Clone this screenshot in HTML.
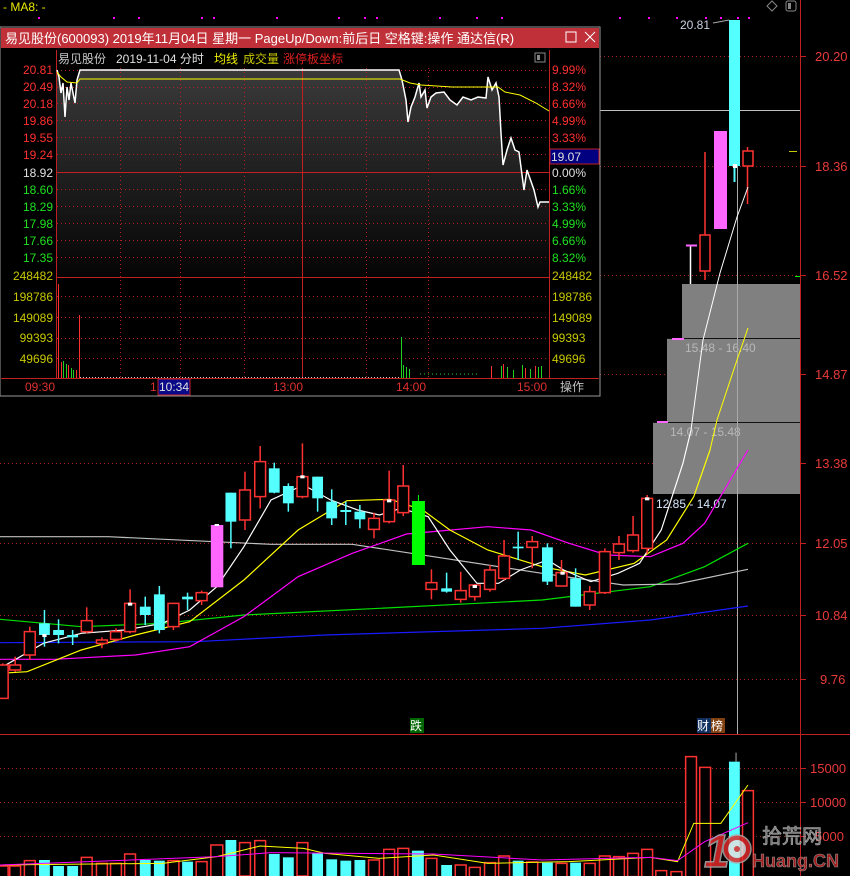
<!DOCTYPE html>
<html><head><meta charset="utf-8"><style>
body{margin:0;background:#000;width:850px;height:876px;overflow:hidden;font-family:"Liberation Sans","Noto Sans CJK SC",sans-serif;}
svg{position:absolute;left:0;top:0}
text{font-family:"Liberation Sans","Noto Sans CJK SC",sans-serif}
</style></head><body>
<svg width="850" height="876" viewBox="0 0 850 876">
<defs>
<linearGradient id="gg" x1="0" y1="0" x2="0" y2="1"><stop offset="0" stop-color="#3a3a3a"/><stop offset="1" stop-color="#050505"/></linearGradient>
</defs>
<rect width="850" height="876" fill="#000"/>
<text x="3" y="11" font-size="12" fill="#e8e800">-  MA8: -</text>
<g fill="#ff00ff">
<rect x="38" y="17" width="2" height="2"/><rect x="113" y="17" width="2" height="2"/><rect x="138" y="17" width="2" height="2"/><rect x="201" y="17" width="2" height="2"/><rect x="213" y="17" width="2" height="2"/><rect x="276" y="17" width="2" height="2"/><rect x="338" y="17" width="2" height="2"/><rect x="364" y="17" width="2" height="2"/><rect x="376" y="17" width="2" height="2"/><rect x="439" y="17" width="2" height="2"/><rect x="476" y="17" width="2" height="2"/><rect x="501" y="17" width="2" height="2"/>
<rect x="619" y="17" width="2" height="2"/><rect x="648" y="17" width="2" height="2"/><rect x="676" y="17" width="2" height="2"/><rect x="705" y="17" width="2" height="2"/><rect x="720" y="17" width="2" height="2"/><rect x="737" y="17" width="2" height="2"/><rect x="748" y="17" width="2" height="2"/>
</g>
<path d="M772 1 L777 6 L772 11 L767 6Z" fill="none" stroke="#888"/>
<rect x="786" y="1" width="10" height="10" rx="2" fill="none" stroke="#888"/><rect x="788" y="3" width="3" height="6" fill="#888"/>
<line x1="800.5" y1="0" x2="800.5" y2="876" stroke="#c02020"/>
<line x1="0" y1="734.5" x2="850" y2="734.5" stroke="#c02020"/>
<g stroke="#a02020" stroke-dasharray="1,3">
<line x1="0" y1="56.5" x2="800" y2="56.5"/><line x1="0" y1="166.5" x2="800" y2="166.5"/><line x1="0" y1="275.5" x2="800" y2="275.5"/><line x1="0" y1="374.5" x2="800" y2="374.5"/><line x1="0" y1="463.5" x2="800" y2="463.5"/><line x1="0" y1="543.5" x2="800" y2="543.5"/><line x1="0" y1="615.5" x2="800" y2="615.5"/><line x1="0" y1="679.5" x2="800" y2="679.5"/>
<line x1="0" y1="768.5" x2="800" y2="768.5"/><line x1="0" y1="802.5" x2="800" y2="802.5"/><line x1="0" y1="836.5" x2="800" y2="836.5"/>
</g>
<g stroke="#c02020"><line x1="800" y1="56.5" x2="806" y2="56.5"/><line x1="800" y1="166.5" x2="806" y2="166.5"/><line x1="800" y1="275.5" x2="806" y2="275.5"/><line x1="800" y1="374.5" x2="806" y2="374.5"/><line x1="800" y1="463.5" x2="806" y2="463.5"/><line x1="800" y1="543.5" x2="806" y2="543.5"/><line x1="800" y1="615.5" x2="806" y2="615.5"/><line x1="800" y1="679.5" x2="806" y2="679.5"/><line x1="800" y1="768.5" x2="806" y2="768.5"/><line x1="800" y1="802.5" x2="806" y2="802.5"/><line x1="800" y1="836.5" x2="806" y2="836.5"/></g>
<g font-size="13" fill="#e83a3a">
<text x="815" y="61">20.20</text><text x="815" y="171">18.36</text><text x="815" y="280">16.52</text><text x="815" y="379">14.87</text><text x="815" y="468">13.38</text><text x="815" y="548">12.05</text><text x="815" y="620">10.84</text><text x="820" y="684">9.76</text>
<text x="810" y="773">15000</text><text x="810" y="807">10000</text><text x="815" y="841">5000</text>
</g>
<line x1="789" y1="151.5" x2="797" y2="151.5" stroke="#c8c800"/><line x1="795" y1="276.5" x2="800" y2="276.5" stroke="#00ff00"/>
<rect x="682" y="284" width="118" height="54" fill="#808080"/>
<rect x="667" y="338" width="133" height="84" fill="#808080"/>
<rect x="653" y="422" width="147" height="72" fill="#808080"/>
<line x1="667" y1="338.5" x2="800" y2="338.5" stroke="#111"/><line x1="653" y1="422.5" x2="800" y2="422.5" stroke="#111"/>
<g font-size="12" fill="#b8b8b8"><text x="685" y="352">15.48 - 16.40</text><text x="670" y="436">14.07 - 15.48</text></g>
<text x="656" y="508" font-size="12" fill="#d8e8ff">12.85 - 14.07</text>
<line x1="600" y1="110.5" x2="800" y2="110.5" stroke="#c0c0c0"/>
<line x1="737.5" y1="20" x2="737.5" y2="734" stroke="#aaa"/>
<line x1="690.5" y1="245" x2="690.5" y2="284" stroke="#fff" stroke-width="1.5"/><line x1="686" y1="245.5" x2="697" y2="245.5" stroke="#ff66ff" stroke-width="2"/>
<line x1="672" y1="339" x2="684" y2="339" stroke="#ff66ff" stroke-width="2"/><line x1="657" y1="422" x2="668" y2="422" stroke="#ff66ff" stroke-width="2"/>
<line x1="705" y1="152" x2="705" y2="280" stroke="#ff3232" stroke-width="1.5"/><rect x="700" y="235" width="10" height="36" fill="#000" stroke="#ff3232" stroke-width="1.5"/>
<rect x="714" y="131" width="13" height="98" fill="#ff66ff"/>
<line x1="734.5" y1="20" x2="734.5" y2="182" stroke="#54ffff" stroke-width="2"/><rect x="729" y="20" width="11" height="146" fill="#54ffff"/><rect x="733" y="164" width="4" height="4" fill="#fff"/>
<line x1="747.5" y1="147" x2="747.5" y2="204" stroke="#ff3232" stroke-width="1.5"/><rect x="743" y="151" width="10" height="15" fill="#000" stroke="#ff3232" stroke-width="1.5"/>
<text x="680" y="29" font-size="12" fill="#c8d0e0">20.81</text><line x1="713" y1="23" x2="729" y2="20" stroke="#aaa"/>
<polyline fill="none" stroke="#fff" points="691,430 703,340 720,273 737,217 748,187"/>
<polyline fill="none" stroke="#ffff00" points="710,450 717,420 737,360 748,328"/>
<g transform="translate(0,430) scale(0.542,0.33333)">
<g fill="none" stroke-width="1.2">
<polyline vector-effect="non-scaling-stroke" stroke="#1a1aff" points="0,638 360,635 600,615 1000,595 1200,570 1380,528"/>
<polyline vector-effect="non-scaling-stroke" stroke="#00e000" points="0,568 150,590 300,580 450,555 700,535 1000,510 1200,470 1300,410 1380,340"/>
<polyline vector-effect="non-scaling-stroke" stroke="#c0c0c0" points="0,320 200,320 500,343 650,343 800,380 1000,430 1150,465 1250,462 1380,418"/>
<polyline vector-effect="non-scaling-stroke" stroke="#ff00ff" points="0,688 100,688 250,675 350,650 450,560 550,440 650,370 750,312 900,290 980,300 1050,340 1120,375 1200,380 1260,340 1300,280 1380,60"/>
<polyline vector-effect="non-scaling-stroke" stroke="#ffff00" points="0,730 50,725 150,660 250,615 350,575 450,450 550,300 640,212 720,208 780,240 830,300 900,360 1000,410 1080,435 1170,400 1230,330 1280,200 1310,60"/>
<polyline vector-effect="non-scaling-stroke" stroke="#ffffff" points="0,715 80,640 150,610 230,600 300,580 350,540 400,470 450,350 500,210 560,165 610,210 660,240 700,255 740,235 790,260 830,360 880,460 920,460 960,420 1010,390 1040,420 1090,455 1140,430 1180,400 1220,300 1260,100 1275,0"/>
</g>
<g stroke="#ff3232" stroke-width="1.5">
<line vector-effect="non-scaling-stroke" x1="5" y1="700" x2="5" y2="805"/><line vector-effect="non-scaling-stroke" x1="28" y1="680" x2="28" y2="725"/><line vector-effect="non-scaling-stroke" x1="55" y1="590" x2="55" y2="690"/><line vector-effect="non-scaling-stroke" x1="160" y1="532" x2="160" y2="610"/><line vector-effect="non-scaling-stroke" x1="188" y1="622" x2="188" y2="655"/><line vector-effect="non-scaling-stroke" x1="214" y1="595" x2="214" y2="635"/><line vector-effect="non-scaling-stroke" x1="240" y1="478" x2="240" y2="610"/><line vector-effect="non-scaling-stroke" x1="320" y1="520" x2="320" y2="600"/><line vector-effect="non-scaling-stroke" x1="372" y1="482" x2="372" y2="525"/><line vector-effect="non-scaling-stroke" x1="452" y1="125" x2="452" y2="300"/><line vector-effect="non-scaling-stroke" x1="480" y1="48" x2="480" y2="235"/><line vector-effect="non-scaling-stroke" x1="558" y1="40" x2="558" y2="205"/><line vector-effect="non-scaling-stroke" x1="690" y1="248" x2="690" y2="325"/><line vector-effect="non-scaling-stroke" x1="718" y1="122" x2="718" y2="280"/><line vector-effect="non-scaling-stroke" x1="744" y1="105" x2="744" y2="258"/><line vector-effect="non-scaling-stroke" x1="796" y1="418" x2="796" y2="508"/><line vector-effect="non-scaling-stroke" x1="850" y1="425" x2="850" y2="518"/><line vector-effect="non-scaling-stroke" x1="876" y1="462" x2="876" y2="512"/><line vector-effect="non-scaling-stroke" x1="904" y1="405" x2="904" y2="485"/><line vector-effect="non-scaling-stroke" x1="930" y1="330" x2="930" y2="450"/><line vector-effect="non-scaling-stroke" x1="982" y1="318" x2="982" y2="415"/><line vector-effect="non-scaling-stroke" x1="1036" y1="390" x2="1036" y2="470"/><line vector-effect="non-scaling-stroke" x1="1088" y1="468" x2="1088" y2="540"/><line vector-effect="non-scaling-stroke" x1="1116" y1="355" x2="1116" y2="492"/><line vector-effect="non-scaling-stroke" x1="1142" y1="318" x2="1142" y2="390"/><line vector-effect="non-scaling-stroke" x1="1168" y1="258" x2="1168" y2="368"/><line vector-effect="non-scaling-stroke" x1="1194" y1="195" x2="1194" y2="372"/>
</g>
<g fill="#000" stroke="#ff3232" stroke-width="1.5">
<rect vector-effect="non-scaling-stroke" x="-5" y="705" width="20" height="100"/><rect vector-effect="non-scaling-stroke" x="18" y="705" width="20" height="15"/><rect vector-effect="non-scaling-stroke" x="45" y="605" width="20" height="70"/><rect vector-effect="non-scaling-stroke" x="150" y="572" width="20" height="33"/><rect vector-effect="non-scaling-stroke" x="178" y="630" width="20" height="10"/><rect vector-effect="non-scaling-stroke" x="204" y="605" width="20" height="23"/><rect vector-effect="non-scaling-stroke" x="230" y="520" width="20" height="85"/><rect vector-effect="non-scaling-stroke" x="310" y="520" width="20" height="70"/><rect vector-effect="non-scaling-stroke" x="362" y="488" width="20" height="24"/><rect vector-effect="non-scaling-stroke" x="442" y="180" width="20" height="90"/><rect vector-effect="non-scaling-stroke" x="470" y="95" width="20" height="105"/><rect vector-effect="non-scaling-stroke" x="548" y="140" width="20" height="60"/><rect vector-effect="non-scaling-stroke" x="680" y="265" width="20" height="33"/><rect vector-effect="non-scaling-stroke" x="708" y="210" width="20" height="65"/><rect vector-effect="non-scaling-stroke" x="734" y="168" width="20" height="80"/><rect vector-effect="non-scaling-stroke" x="786" y="458" width="20" height="20"/><rect vector-effect="non-scaling-stroke" x="840" y="482" width="20" height="26"/><rect vector-effect="non-scaling-stroke" x="866" y="465" width="20" height="35"/><rect vector-effect="non-scaling-stroke" x="894" y="420" width="20" height="58"/><rect vector-effect="non-scaling-stroke" x="920" y="378" width="20" height="67"/><rect vector-effect="non-scaling-stroke" x="972" y="335" width="20" height="17"/><rect vector-effect="non-scaling-stroke" x="1026" y="428" width="20" height="40"/><rect vector-effect="non-scaling-stroke" x="1078" y="485" width="20" height="40"/><rect vector-effect="non-scaling-stroke" x="1106" y="365" width="20" height="123"/><rect vector-effect="non-scaling-stroke" x="1132" y="342" width="20" height="26"/><rect vector-effect="non-scaling-stroke" x="1158" y="315" width="20" height="47"/><rect vector-effect="non-scaling-stroke" x="1184" y="205" width="20" height="150"/>
</g>
<g stroke="#54ffff" stroke-width="1.5">
<line vector-effect="non-scaling-stroke" x1="82" y1="540" x2="82" y2="650"/><line vector-effect="non-scaling-stroke" x1="108" y1="568" x2="108" y2="640"/><line vector-effect="non-scaling-stroke" x1="134" y1="600" x2="134" y2="645"/><line vector-effect="non-scaling-stroke" x1="268" y1="500" x2="268" y2="585"/><line vector-effect="non-scaling-stroke" x1="294" y1="468" x2="294" y2="610"/><line vector-effect="non-scaling-stroke" x1="346" y1="488" x2="346" y2="540"/><line vector-effect="non-scaling-stroke" x1="426" y1="188" x2="426" y2="355"/><line vector-effect="non-scaling-stroke" x1="506" y1="98" x2="506" y2="190"/><line vector-effect="non-scaling-stroke" x1="532" y1="160" x2="532" y2="245"/><line vector-effect="non-scaling-stroke" x1="586" y1="140" x2="586" y2="245"/><line vector-effect="non-scaling-stroke" x1="612" y1="178" x2="612" y2="285"/><line vector-effect="non-scaling-stroke" x1="638" y1="215" x2="638" y2="285"/><line vector-effect="non-scaling-stroke" x1="664" y1="225" x2="664" y2="295"/><line vector-effect="non-scaling-stroke" x1="824" y1="428" x2="824" y2="488"/><line vector-effect="non-scaling-stroke" x1="956" y1="305" x2="956" y2="390"/><line vector-effect="non-scaling-stroke" x1="1010" y1="340" x2="1010" y2="465"/><line vector-effect="non-scaling-stroke" x1="1062" y1="415" x2="1062" y2="530"/>
</g>
<g fill="#54ffff">
<rect x="72" y="580" width="20" height="35"/><rect x="98" y="600" width="20" height="15"/><rect x="124" y="615" width="20" height="7"/><rect x="258" y="530" width="20" height="25"/><rect x="284" y="493" width="20" height="107"/><rect x="336" y="500" width="20" height="8"/><rect x="416" y="188" width="20" height="87"/><rect x="496" y="115" width="20" height="73"/><rect x="522" y="168" width="20" height="52"/><rect x="576" y="140" width="20" height="65"/><rect x="602" y="215" width="20" height="50"/><rect x="628" y="240" width="20" height="6"/><rect x="654" y="245" width="20" height="23"/><rect x="814" y="475" width="20" height="10"/><rect x="946" y="350" width="20" height="5"/><rect x="1000" y="352" width="20" height="103"/><rect x="1052" y="445" width="20" height="85"/>
</g>
<rect x="389" y="285" width="23" height="187" fill="#ff66ff"/>
<line x1="772" y1="195" x2="772" y2="405" stroke="#00ff00" vector-effect="non-scaling-stroke"/><rect x="760" y="213" width="24" height="192" fill="#00ff00"/>
<g fill="#fff"><rect x="236" y="518" width="8" height="9"/><rect x="78" y="612" width="8" height="9"/><rect x="554" y="136" width="8" height="9"/><rect x="714" y="208" width="8" height="9"/><rect x="872" y="465" width="8" height="9"/><rect x="1034" y="425" width="8" height="9"/><rect x="1190" y="202" width="8" height="9"/><rect x="396" y="282" width="8" height="6"/></g>
</g>
<rect x="410" y="718" width="14" height="15" fill="#006600"/><text x="410" y="730" font-size="12" fill="#fff">跌</text>
<rect x="697" y="718" width="14" height="15" fill="#103060"/><text x="697" y="730" font-size="12" fill="#fff">财</text>
<rect x="711" y="718" width="14" height="15" fill="#804010"/><text x="711" y="730" font-size="12" fill="#fff">榜</text>
<g transform="translate(0,430) scale(0.542,0.33333)">
<g fill="#000" stroke="#ff3232" stroke-width="1.5">
<rect vector-effect="non-scaling-stroke" x="-5" y="1308" width="20" height="40"/><rect vector-effect="non-scaling-stroke" x="18" y="1308" width="20" height="40"/><rect vector-effect="non-scaling-stroke" x="45" y="1292" width="20" height="50"/><rect vector-effect="non-scaling-stroke" x="150" y="1282" width="20" height="60"/><rect vector-effect="non-scaling-stroke" x="178" y="1300" width="20" height="50"/><rect vector-effect="non-scaling-stroke" x="204" y="1300" width="20" height="50"/><rect vector-effect="non-scaling-stroke" x="230" y="1272" width="20" height="70"/><rect vector-effect="non-scaling-stroke" x="310" y="1292" width="20" height="50"/><rect vector-effect="non-scaling-stroke" x="362" y="1295" width="20" height="50"/><rect vector-effect="non-scaling-stroke" x="389" y="1245" width="22" height="100"/><rect vector-effect="non-scaling-stroke" x="442" y="1238" width="20" height="100"/><rect vector-effect="non-scaling-stroke" x="470" y="1232" width="20" height="110"/><rect vector-effect="non-scaling-stroke" x="548" y="1238" width="20" height="100"/><rect vector-effect="non-scaling-stroke" x="680" y="1290" width="20" height="60"/><rect vector-effect="non-scaling-stroke" x="708" y="1258" width="20" height="90"/><rect vector-effect="non-scaling-stroke" x="734" y="1255" width="20" height="90"/><rect vector-effect="non-scaling-stroke" x="786" y="1285" width="20" height="60"/><rect vector-effect="non-scaling-stroke" x="840" y="1305" width="20" height="40"/><rect vector-effect="non-scaling-stroke" x="866" y="1312" width="20" height="40"/><rect vector-effect="non-scaling-stroke" x="894" y="1298" width="20" height="50"/><rect vector-effect="non-scaling-stroke" x="920" y="1278" width="20" height="70"/><rect vector-effect="non-scaling-stroke" x="972" y="1296" width="20" height="50"/><rect vector-effect="non-scaling-stroke" x="1026" y="1300" width="20" height="50"/><rect vector-effect="non-scaling-stroke" x="1078" y="1300" width="20" height="50"/><rect vector-effect="non-scaling-stroke" x="1106" y="1278" width="20" height="70"/><rect vector-effect="non-scaling-stroke" x="1132" y="1280" width="20" height="70"/><rect vector-effect="non-scaling-stroke" x="1158" y="1270" width="20" height="70"/><rect vector-effect="non-scaling-stroke" x="1184" y="1258" width="20" height="90"/><rect vector-effect="non-scaling-stroke" x="1210" y="1322" width="20" height="30"/><rect vector-effect="non-scaling-stroke" x="1238" y="1325" width="20" height="30"/><rect vector-effect="non-scaling-stroke" x="1265" y="980" width="20" height="370"/><rect vector-effect="non-scaling-stroke" x="1291" y="1012" width="20" height="340"/><rect vector-effect="non-scaling-stroke" x="1370" y="1082" width="20" height="270"/>
</g>
<g fill="#54ffff">
<rect x="72" y="1290" width="20" height="60"/><rect x="98" y="1308" width="20" height="40"/><rect x="124" y="1308" width="20" height="40"/><rect x="258" y="1290" width="20" height="60"/><rect x="284" y="1292" width="20" height="60"/><rect x="336" y="1295" width="20" height="60"/><rect x="416" y="1230" width="20" height="120"/><rect x="496" y="1272" width="20" height="80"/><rect x="522" y="1282" width="20" height="70"/><rect x="576" y="1270" width="20" height="80"/><rect x="602" y="1288" width="20" height="60"/><rect x="628" y="1292" width="20" height="60"/><rect x="654" y="1290" width="20" height="60"/><rect x="760" y="1262" width="22" height="90"/><rect x="814" y="1305" width="20" height="50"/><rect x="946" y="1292" width="20" height="60"/><rect x="1000" y="1298" width="20" height="60"/><rect x="1052" y="1298" width="20" height="60"/><rect x="1345" y="995" width="20" height="360"/>
</g>
<line x1="1358" y1="968" x2="1358" y2="995" stroke="#aaa" vector-effect="non-scaling-stroke"/>
<polyline fill="none" vector-effect="non-scaling-stroke" stroke="#ffff00" points="0,1305 300,1300 400,1280 480,1248 560,1255 600,1270 700,1285 800,1275 900,1300 1050,1295 1200,1282 1250,1295 1280,1180 1330,1180 1380,1065"/>
<polyline fill="none" vector-effect="non-scaling-stroke" stroke="#ff00ff" points="0,1305 400,1280 500,1268 800,1272 1000,1290 1200,1282 1250,1292 1300,1235 1380,1178"/>
</g>
<g opacity="0.85">
<text x="704" y="867" font-size="46" font-weight="bold" fill="#e02828" stroke="#aaa" stroke-width="1.5" font-style="italic">1</text>
<circle cx="737" cy="849" r="14" fill="#e02828" stroke="#aaa" stroke-width="1.5"/><circle cx="737" cy="849" r="9" fill="#e0e0e0"/><circle cx="737" cy="849" r="3" fill="#e02828"/>
<text x="762" y="843" font-size="20" fill="#888" stroke="#ccc" stroke-width="0.6">拾荒网</text>
<text x="752" y="867" font-size="18" font-weight="bold" fill="#c02020" stroke="#aaa" stroke-width="0.6">Huang.CN</text>
</g>
<rect x="0" y="27" width="600" height="369" fill="#000" stroke="#999"/>
<rect x="1" y="28" width="598" height="20" fill="#c03038"/>
<text x="5" y="43" font-size="13" fill="#fff">易见股份(600093) 2019年11月04日 星期一 PageUp/Down:前后日 空格键:操作 通达信(R)</text>
<rect x="566" y="32" width="10" height="10" fill="none" stroke="#fff"/>
<path d="M585 32 L595 42 M595 32 L585 42" stroke="#fff"/>
<text x="58" y="63" font-size="12" fill="#c8c8c8">易见股份</text>
<text x="116" y="63" font-size="12" fill="#e0e0e0">2019-11-04 分时</text>
<text x="214" y="63" font-size="12" fill="#f0f000">均线</text>
<text x="243" y="63" font-size="12" fill="#c8c800">成交量</text>
<text x="283" y="63" font-size="12" fill="#e02020">涨停板坐标</text>
<rect x="535" y="53" width="10" height="9" fill="none" stroke="#888"/><rect x="537" y="55" width="3" height="5" fill="#888"/>
<polygon fill="url(#gg)" points="57,70 59,77 61,93 63,83 65,117 67,87 69,100 71,83 73,93 75,103 77,80 80,70 399,70 402,80 406,100 408,122 411,107 415,97 419,83 421,97 425,90 427,108 431,97 436,93 444,92 450,100 457,105 463,97 471,100 478,97 486,98 488,77 492,90 496,83 499,97 501,133 503,165 507,150 511,138 515,150 519,152 524,190 527,170 534,190 538,207 540,202 549,202 549,277 57,277"/>
<g stroke="#b02020" stroke-dasharray="1,3">
<line x1="57" y1="70.5" x2="549" y2="70.5"/><line x1="57" y1="87.5" x2="549" y2="87.5"/><line x1="57" y1="103.5" x2="549" y2="103.5"/><line x1="57" y1="120.5" x2="549" y2="120.5"/><line x1="57" y1="137.5" x2="549" y2="137.5"/><line x1="57" y1="154.5" x2="549" y2="154.5"/><line x1="57" y1="189.5" x2="549" y2="189.5"/><line x1="57" y1="206.5" x2="549" y2="206.5"/><line x1="57" y1="223.5" x2="549" y2="223.5"/><line x1="57" y1="240.5" x2="549" y2="240.5"/><line x1="57" y1="257.5" x2="549" y2="257.5"/><line x1="57" y1="296.5" x2="549" y2="296.5"/><line x1="57" y1="317.5" x2="549" y2="317.5"/><line x1="57" y1="338.5" x2="549" y2="338.5"/><line x1="57" y1="358.5" x2="549" y2="358.5"/>
<line x1="120.5" y1="68" x2="120.5" y2="378"/><line x1="180.5" y1="68" x2="180.5" y2="378"/><line x1="244.5" y1="68" x2="244.5" y2="378"/><line x1="366.5" y1="68" x2="366.5" y2="378"/><line x1="428.5" y1="68" x2="428.5" y2="378"/>
</g>
<g stroke="#c02020"><line x1="57" y1="172.5" x2="549" y2="172.5"/><line x1="57" y1="277.5" x2="549" y2="277.5"/><line x1="302.5" y1="68" x2="302.5" y2="378"/><line x1="56.5" y1="50" x2="56.5" y2="378"/><line x1="549.5" y1="50" x2="549.5" y2="378"/><line x1="1" y1="378.5" x2="599" y2="378.5"/></g>
<polyline fill="none" stroke="#fff" stroke-width="1.5" points="57,70 59,77 61,93 63,83 65,117 67,87 69,100 71,83 73,93 75,103 77,80 80,70 399,70 402,80 406,100 408,122 411,107 415,97 419,83 421,97 425,90 427,108 431,97 436,93 444,92 450,100 457,105 463,97 471,100 478,97 486,98 488,77 492,90 496,83 499,97 501,133 503,165 507,150 511,138 515,150 519,152 524,190 527,170 534,190 538,207 540,202 549,202"/>
<polyline fill="none" stroke="#ffff00" points="57,72 61,77 67,82 77,83 80,79 400,79 410,83 421,85 452,87 498,87 505,92 520,95 536,103 549,111"/>
<g stroke="#ff3030"><line x1="58.5" y1="284" x2="58.5" y2="378"/><line x1="79.5" y1="315" x2="79.5" y2="378"/><line x1="61.5" y1="362" x2="61.5" y2="378"/><line x1="68.5" y1="365" x2="68.5" y2="378"/><line x1="76.5" y1="370" x2="76.5" y2="378"/><line x1="491.5" y1="366" x2="491.5" y2="378"/><line x1="503.5" y1="364" x2="503.5" y2="378"/><line x1="525.5" y1="368" x2="525.5" y2="378"/><line x1="535.5" y1="366" x2="535.5" y2="378"/></g>
<g stroke="#20d020"><line x1="63.5" y1="361" x2="63.5" y2="378"/><line x1="66.5" y1="364" x2="66.5" y2="378"/><line x1="71.5" y1="368" x2="71.5" y2="378"/><line x1="73.5" y1="370" x2="73.5" y2="378"/><line x1="401.5" y1="337" x2="401.5" y2="378"/><line x1="403.5" y1="365" x2="403.5" y2="378"/><line x1="406.5" y1="367" x2="406.5" y2="378"/><line x1="409.5" y1="369" x2="409.5" y2="378"/><line x1="420" y1="374" x2="480" y2="374" stroke-dasharray="1,3"/><line x1="501.5" y1="366" x2="501.5" y2="378"/><line x1="507.5" y1="367" x2="507.5" y2="378"/><line x1="513.5" y1="370" x2="513.5" y2="378"/><line x1="522.5" y1="365" x2="522.5" y2="378"/><line x1="530.5" y1="369" x2="530.5" y2="378"/><line x1="538.5" y1="367" x2="538.5" y2="378"/><line x1="541.5" y1="366" x2="541.5" y2="378"/></g>
<line x1="80" y1="377.5" x2="399" y2="377.5" stroke="#ccc" stroke-dasharray="1,2"/>
<g font-size="12" text-anchor="end">
<text x="53" y="74" fill="#ff3030">20.81</text><text x="53" y="91" fill="#ff3030">20.49</text><text x="53" y="108" fill="#ff3030">20.18</text><text x="53" y="125" fill="#ff3030">19.86</text><text x="53" y="142" fill="#ff3030">19.55</text><text x="53" y="159" fill="#ff3030">19.24</text><text x="53" y="177" fill="#e0e0e0">18.92</text><text x="53" y="194" fill="#20e020">18.60</text><text x="53" y="211" fill="#20e020">18.29</text><text x="53" y="228" fill="#20e020">17.98</text><text x="53" y="245" fill="#20e020">17.66</text><text x="53" y="262" fill="#20e020">17.35</text>
<g fill="#c8c800"><text x="53" y="280">248482</text><text x="53" y="301">198786</text><text x="53" y="322">149089</text><text x="53" y="342">99393</text><text x="53" y="363">49696</text></g>
</g>
<g font-size="12">
<text x="552" y="74" fill="#ff3030">9.99%</text><text x="552" y="91" fill="#ff3030">8.32%</text><text x="552" y="108" fill="#ff3030">6.66%</text><text x="552" y="125" fill="#ff3030">4.99%</text><text x="552" y="142" fill="#ff3030">3.33%</text><text x="552" y="177" fill="#e0e0e0">0.00%</text><text x="552" y="194" fill="#20e020">1.66%</text><text x="552" y="211" fill="#20e020">3.33%</text><text x="552" y="228" fill="#20e020">4.99%</text><text x="552" y="245" fill="#20e020">6.66%</text><text x="552" y="262" fill="#20e020">8.32%</text>
<g fill="#c8c800"><text x="552" y="280">248482</text><text x="552" y="301">198786</text><text x="552" y="322">149089</text><text x="552" y="342">99393</text><text x="552" y="363">49696</text></g>
</g>
<rect x="550" y="149" width="49" height="15" fill="#000080" stroke="#c02020"/>
<text x="551" y="161" font-size="12" fill="#e0e0e0">19.07</text>
<g font-size="12" fill="#e03030">
<text x="25" y="391">09:30</text><text x="150" y="391">1</text><text x="273" y="391">13:00</text><text x="396" y="391">14:00</text><text x="517" y="391">15:00</text>
</g>
<rect x="158" y="379" width="32" height="16" fill="#0a0a88" stroke="#c02020"/>
<text x="159" y="391" font-size="12" fill="#e0e0e0">10:34</text>
<text x="560" y="391" font-size="12" fill="#c0c0c0">操作</text>
</svg>
</body></html>
